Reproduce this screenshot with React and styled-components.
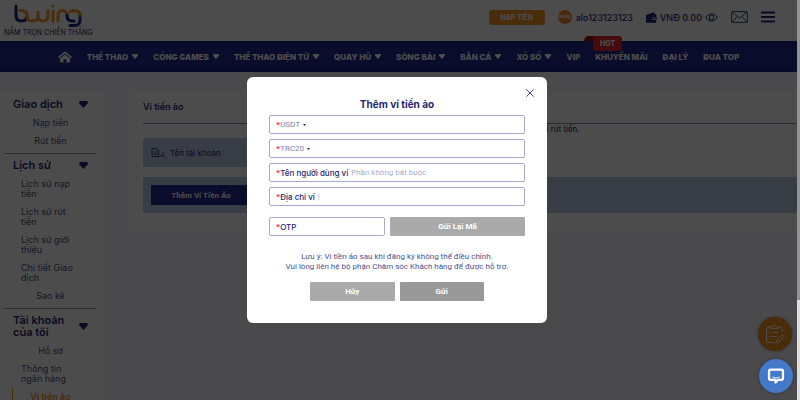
import React, { useState } from 'react'
import styled, { createGlobalStyle } from 'styled-components'

const menu = [
  { name: 'THỂ THAO', drop: true },
  { name: 'CỔNG GAMES', drop: true },
  { name: 'THỂ THAO ĐIỆN TỬ', drop: true },
  { name: 'QUAY HŨ', drop: true },
  { name: 'SÒNG BÀI', drop: true },
  { name: 'BẮN CÁ', drop: true },
  { name: 'XỔ SỐ', drop: true },
  { name: 'VIP' },
  { name: 'KHUYẾN MÃI', hot: true },
  { name: 'ĐẠI LÝ' },
  { name: 'ĐUA TOP' },
]

const sections = [
  { title: 'Giao dịch', items: ['Nạp tiền', 'Rút tiền'] },
  {
    title: 'Lịch sử',
    items: ['Lịch sử nạp tiền', 'Lịch sử rút tiền', 'Lịch sử giới thiệu', 'Chi tiết Giao dịch', 'Sao kê'],
  },
  { title: 'Tài khoản của tôi', items: ['Hồ sơ', 'Thông tin ngân hàng', 'Ví tiền ảo'] },
]

const Logo = () => (
  <svg width="70" height="24" viewBox="0 0 70 24" fill="none" strokeWidth="3" strokeLinecap="round" aria-label="bwing" role="img">
    <path d="M3 2V11.5Q3 17 8.5 17Q14 17 14 12" stroke="#1d2786" />
    <path d="M7 6.5H8.5Q14 6.5 14 12Q14 17 19.5 17Q25 17 25 12V7V12Q25 17 30 17Q35 17 35 12V7" stroke="#f39322" />
    <path d="M40 7.5V17M40 2V2.1M45 17V12Q45 6.5 49.5 6.5Q54 6.5 54 11.5" stroke="#f39322" />
    <path d="M54 11.5Q54 17 59.5 17H61M67 10V16Q67 21.5 61.5 21.5H57" stroke="#1d2786" />
    <path d="M57 8Q58.5 6.5 61 6.5Q67 6.5 67 11.5" stroke="#f39322" />
  </svg>
)

const Caret = () => (
  <svg width="6" height="5" viewBox="0 0 6 5" fill="currentColor" aria-hidden="true">
    <path d="M.6 0H5.4Q6 0 6 .7V1.6L3.4 4.7Q3 5.1 2.6 4.7L0 1.6V.7Q0 0 .6 0Z" />
  </svg>
)

const SmallCaret = () => (
  <svg width="3" height="2" viewBox="0 0 3 2" fill="currentColor" aria-hidden="true">
    <path d="M0 0H3L1.5 2Z" />
  </svg>
)

const HomeIcon = () => (
  <svg width="14" height="12" viewBox="0 0 14 12" aria-hidden="true">
    <path d="M.8 6.3L7 1.3L13.2 6.3" fill="none" stroke="currentColor" strokeWidth="1.6" strokeLinecap="round" strokeLinejoin="round" />
    <path d="M7 3.6L12 7.6V10.6Q12 11.4 11.2 11.4H8.5V8.2H5.5V11.4H2.8Q2 11.4 2 10.6V7.6Z" fill="currentColor" />
  </svg>
)

const WalletIcon = () => (
  <svg width="11" height="11" viewBox="0 0 11 11" fill="currentColor" aria-hidden="true">
    <path d="M0 3L8 .3L8.8 2.2H9.6Q10.3 2.2 10.3 3V4.9H7.5Q6 5 6 6.4Q6 7.9 7.5 7.9H10.3V10Q10.3 10.8 9.5 10.8H.8Q0 10.8 0 10Z" />
    <path d="M7.4 5.5H11V7.3H7.4Q6.7 7.2 6.7 6.4Q6.7 5.6 7.4 5.5Z" />
  </svg>
)

const EyeIcon = () => (
  <svg width="13" height="9" viewBox="0 0 13 9" fill="none" stroke="currentColor" strokeWidth="1" aria-hidden="true">
    <path d="M.5 4.5Q3 .8 6.5 .8Q10 .8 12.5 4.5Q10 8.2 6.5 8.2Q3 8.2 .5 4.5Z" />
    <circle cx="6.5" cy="4.5" r="2.3" />
  </svg>
)

const MailIcon = () => (
  <svg width="17" height="12" viewBox="0 0 17 12" fill="none" stroke="currentColor" strokeWidth=".9" aria-hidden="true">
    <rect x=".6" y=".6" width="15.8" height="10.8" rx=".8" />
    <path d="M1 1L8.5 7L16 1M1 11L6.2 5.4M16 11L10.8 5.4" />
  </svg>
)

const BurgerIcon = () => (
  <svg width="14" height="12" viewBox="0 0 14 12" stroke="currentColor" strokeWidth="2" aria-hidden="true">
    <path d="M0 1.5H14M0 6H14M0 10.5H14" />
  </svg>
)

const AccountIcon = () => (
  <svg width="15" height="10" viewBox="0 0 15 10" fill="none" stroke="currentColor" strokeWidth=".9" aria-hidden="true">
    <path d="M1 .6H5.6L7.6 2.6V8.6H1ZM2.6 4H6M2.6 6H6M9 8.4L10 7L10.6 8H14M11 6.4L13.4 4.4" />
  </svg>
)

const CloseIcon = () => (
  <svg width="8" height="8" viewBox="0 0 8 8" stroke="currentColor" strokeWidth="1" aria-hidden="true">
    <path d="M.3 .3L7.7 7.7M7.7 .3L.3 7.7" />
  </svg>
)

const ClipboardIcon = () => (
  <svg width="20" height="20" viewBox="0 0 20 20" fill="none" stroke="currentColor" strokeWidth="1" strokeLinejoin="round" aria-hidden="true">
    <path d="M6 3H3Q1.5 3 1.5 4.5V17Q1.5 18.5 3 18.5H10M13 3H15.5Q17 3 17 4.5V8.5" />
    <path d="M6 4.5V2.5H7.8Q8 1 9.5 1Q11 1 11.2 2.5H13V4.5Z" />
    <path d="M4.5 8.5H6M7.5 8.5H13M4.5 12.5H6M7.5 12.5H12" />
    <path d="M12 16L17.5 10.8L19.3 12.6L14 18L11.5 18.5Z" />
  </svg>
)

const ChatIcon = () => (
  <svg width="18" height="18" viewBox="0 0 16 16" fill="none" aria-hidden="true">
    <path d="M3.2 2.4H12.8Q14.2 2.4 14.2 3.8V10Q14.2 11.4 12.8 11.4H10L7.6 13.8V11.4H3.2Q1.8 11.4 1.8 10V3.8Q1.8 2.4 3.2 2.4Z" stroke="#fff" strokeWidth="2" strokeLinejoin="round" />
    <path d="M4.8 9Q8 10.6 11.2 9" stroke="#fff" strokeWidth=".8" />
  </svg>
)

export default function App() {
  const [open, setOpen] = useState(true)

  return (
    <>
      <GlobalStyle />
      <Page>
        <Header>
          <Brand href="#">
            <Logo />
            <span>NẮM TRỌN CHIẾN THẮNG</span>
          </Brand>
          <Account>
            <Deposit type="button">NẠP TIỀN</Deposit>
            <User href="#">
              <Avatar>bwing</Avatar>
              alo123123123
            </User>
            <Balance>
              <WalletIcon />
              VNĐ 0.00
              <IconButton type="button" aria-label="Ẩn số dư"><EyeIcon /></IconButton>
            </Balance>
            <IconButton type="button" aria-label="Tin nhắn"><MailIcon /></IconButton>
            <IconButton type="button" aria-label="Menu"><BurgerIcon /></IconButton>
          </Account>
        </Header>

        <Nav>
          <NavLink href="#" aria-label="Trang chủ"><HomeIcon /></NavLink>
          {menu.map((m) => (
            <NavLink href="#" key={m.name}>
              {m.name}
              {m.drop && <Caret />}
              {m.hot && <Hot>HOT</Hot>}
            </NavLink>
          ))}
        </Nav>

        <Body>
          <Sidebar>
            {sections.map((s) => (
              <Section key={s.title}>
                <SectionTitle>
                  {s.title}
                  <Caret />
                </SectionTitle>
                {s.items.map((item) => (
                  <SideLink href="#" key={item} $active={item === 'Ví tiền ảo'}>
                    <span>{item}</span>
                  </SideLink>
                ))}
              </Section>
            ))}
          </Sidebar>

          <Card>
            <CardTitle>Ví tiền ảo</CardTitle>
            <CardNote>Vui lòng thêm ví tiền ảo của bạn vào đây trước khi rút tiền.</CardNote>
            <NameBox>
              <AccountIcon />
              Tên tài khoản
            </NameBox>
            <ActionBox>
              <AddButton type="button" onClick={() => setOpen(true)}>Thêm Ví Tiền Ảo</AddButton>
            </ActionBox>
          </Card>
        </Body>
      </Page>

      <NoteFab type="button" aria-label="Khảo sát"><ClipboardIcon /></NoteFab>
      <ScrollTrack><ScrollThumb /></ScrollTrack>

      {open && (
        <Overlay>
          <Modal role="dialog" aria-labelledby="wallet-title">
            <Close type="button" aria-label="Đóng" onClick={() => setOpen(false)}><CloseIcon /></Close>
            <ModalTitle id="wallet-title">Thêm ví tiền ảo</ModalTitle>
            <Form onSubmit={(e) => e.preventDefault()}>
              <Field>
                <Star>*</Star>
                <Select aria-label="Loại tiền"><option>USDT</option></Select>
                <SmallCaret />
              </Field>
              <Field>
                <Star>*</Star>
                <Select aria-label="Giao thức"><option>TRC20</option></Select>
                <SmallCaret />
              </Field>
              <Field>
                <Star>*</Star>
                <label htmlFor="owner">Tên người dùng ví</label>
                <Input id="owner" placeholder="Phần không bắt buộc" />
              </Field>
              <Field>
                <Star>*</Star>
                <label htmlFor="address">Địa chỉ ví</label>
                <Input id="address" placeholder="|" />
              </Field>
              <OtpRow>
                <Field>
                  <Star>*</Star>
                  <label htmlFor="otp">OTP</label>
                  <Input id="otp" />
                </Field>
                <GreyButton type="button">Gửi Lại Mã</GreyButton>
              </OtpRow>
              <Notice>
                Lưu ý: Ví tiền ảo sau khi đăng ký không thể điều chỉnh.
                <br />
                Vui lòng liên hệ bộ phận Chăm sóc Khách hàng để được hỗ trợ.
              </Notice>
              <Actions>
                <GreyButton type="button" onClick={() => setOpen(false)}>Hủy</GreyButton>
                <GreyButton type="submit" $dark>Gửi</GreyButton>
              </Actions>
            </Form>
          </Modal>
        </Overlay>
      )}

      <ChatFab type="button" aria-label="Chat"><ChatIcon /></ChatFab>
    </>
  )
}

const GlobalStyle = createGlobalStyle`
  * {
    box-sizing: border-box;
  }
  body {
    margin: 0;
    overflow: hidden;
    background: #f7f7fd;
    color: #1d2770;
    font-family: Inter, "Noto Sans", sans-serif;
    font-size: 8px;
  }
  button, input, select {
    font: inherit;
    color: inherit;
    border: 0;
    padding: 0;
    background: none;
  }
  button {
    cursor: pointer;
  }
  a {
    color: inherit;
    text-decoration: none;
  }
  svg {
    display: block;
    flex: none;
  }
`

const Page = styled.div`
  height: 100vh;
  overflow: hidden;
  padding-right: 3px;
`

const Header = styled.header`
  height: 41px;
  padding: 4px 22px 0 4px;
  display: flex;
  align-items: flex-start;
  justify-content: space-between;
  background: #fff;
`

const Brand = styled.a`
  display: flex;
  flex-direction: column;
  align-items: center;
  font-size: 7px;
  line-height: 10px;
  font-weight: 400;
  white-space: nowrap;
`

const Account = styled.div`
  height: 26px;
  display: flex;
  align-items: center;
  gap: 13px;
  font-size: 9px;
  font-weight: 500;
`

const Deposit = styled.button`
  width: 56px;
  height: 15px;
  border-radius: 3px;
  background: #f39322;
  color: #fff;
  font-size: 7px;
  font-weight: 700;
`

const User = styled.a`
  display: flex;
  align-items: center;
  gap: 4px;
`

const Avatar = styled.span`
  width: 14px;
  height: 14px;
  border-radius: 50%;
  background: #f08235;
  color: #fff;
  font-size: 4px;
  line-height: 14px;
  font-weight: 700;
  text-align: center;
`

const Balance = styled.div`
  display: flex;
  align-items: center;
  gap: 3px;
`

const IconButton = styled.button`
  display: block;
`

const Nav = styled.nav`
  height: 31px;
  display: flex;
  align-items: center;
  justify-content: center;
  gap: 15px;
  background: #1e2a8c;
  border-top: 1px solid #141c66;
  border-bottom: 1px solid #141c66;
  color: #fff;
  font-weight: 800;
`

const NavLink = styled.a`
  position: relative;
  display: flex;
  align-items: center;
  gap: 4px;
  white-space: nowrap;
`

const Hot = styled.span`
  position: absolute;
  left: -2px;
  top: -16px;
  width: 29px;
  height: 15px;
  border-radius: 0 3px 3px 3px;
  background: #e8262c;
  font-size: 7px;
  line-height: 15px;
  text-align: center;

  &::before {
    content: "";
    position: absolute;
    right: 100%;
    top: 0;
    width: 9px;
    height: 5px;
    border-radius: 5px 0 0 0;
    background: #9c1418;
  }
`

const Body = styled.div`
  display: flex;
  align-items: flex-start;
  gap: 24px;
  padding-top: 19px;
`

const Sidebar = styled.aside`
  width: 105px;
  flex: none;
  padding: 2px 9px 0 4px;
  background: #fff;
`

const Section = styled.section`
  padding: 5px 0 3px;

  & + & {
    border-top: 1px solid #9a9aa6;
  }
`

const SectionTitle = styled.h2`
  margin: 0 0 4px;
  padding: 0 8px 0 9px;
  display: flex;
  align-items: center;
  justify-content: space-between;
  gap: 12px;
  font-size: 11px;
  line-height: 12px;
  font-weight: 600;

  svg {
    width: 9px;
    height: 7px;
  }
`

const SideLink = styled.a`
  margin-left: 8px;
  padding: 4px 16px 4px 8px;
  display: flex;
  justify-content: center;
  border-left: 1px solid ${(p) => (p.$active ? '#f39322' : 'transparent')};
  color: ${(p) => (p.$active ? '#f39322' : '#4b5080')};
  font-weight: ${(p) => (p.$active ? 600 : 400)};
  font-size: 9px;
  line-height: 10px;
`

const Card = styled.main`
  flex: 1;
  padding: 11px 0 20px 14px;
  border-radius: 4px 0 0 4px;
  background: #fff;
`

const CardTitle = styled.h1`
  margin: 0;
  padding-bottom: 11px;
  border-bottom: 1px solid #8a8aa0;
  font-size: 9px;
  line-height: 10px;
  font-weight: 600;
`

const CardNote = styled.p`
  margin: 0 0 4px;
  line-height: 10px;
  text-align: center;
`

const NameBox = styled.div`
  width: 50%;
  height: 29px;
  margin-bottom: 10px;
  padding: 0 8px;
  display: flex;
  align-items: center;
  gap: 4px;
  border-radius: 2px;
  background: #bdcee6;
`

const ActionBox = styled.div`
  padding: 8px;
  border-radius: 2px;
  background: #bdcee6;
`

const AddButton = styled.button`
  width: 100px;
  height: 20px;
  display: block;
  background: #1e2a8c;
  color: #fff;
  font-family: Roboto, sans-serif;
  font-weight: 700;
`

const NoteFab = styled.button`
  position: fixed;
  right: 8px;
  bottom: 49px;
  width: 34px;
  height: 34px;
  display: grid;
  place-items: center;
  border-radius: 50%;
  background: #f7941d;
  color: #fff;
  box-shadow: 0 0 3px rgba(0, 0, 0, 0.4);
`

const ChatFab = styled(NoteFab)`
  right: 7px;
  bottom: 7px;
  background: #4379c8;
`

const ScrollTrack = styled.div`
  position: fixed;
  top: 0;
  right: 0;
  bottom: 0;
  width: 3px;
  background: #dedede;
`

const ScrollThumb = styled.div`
  height: 75%;
  background: #939393;
`

const Overlay = styled.div`
  position: fixed;
  inset: 0 3px 0 0;
  padding-right: 3px;
  display: flex;
  align-items: center;
  justify-content: center;
  background: rgba(0, 0, 0, 0.7);
`

const Modal = styled.div`
  position: relative;
  width: 300px;
  padding: 21px 22px 22px;
  border-radius: 6px;
  background: #fff;
`

const Close = styled.button`
  position: absolute;
  top: 12px;
  right: 13px;
  color: #3c4c9c;
`

const ModalTitle = styled.h2`
  margin: 0 0 5px;
  font-size: 10px;
  line-height: 12px;
  font-weight: 700;
  text-align: center;
`

const Form = styled.form`
  display: flex;
  flex-direction: column;
  gap: 5px;
`

const Field = styled.div`
  flex: 1 0 auto;
  min-width: 0;
  height: 19px;
  padding: 0 6px;
  display: flex;
  align-items: center;
  border: 1px solid #a5acd4;
  border-radius: 2px;
  font-weight: 500;
  white-space: nowrap;
`

const Star = styled.span`
  color: #f00;
`

const Select = styled.select`
  appearance: none;
  margin-right: 3px;
  color: #7d83ac;
  font-family: Roboto, sans-serif;
  font-weight: 400;
`

const Input = styled.input`
  flex: 1;
  min-width: 0;
  margin-left: 3px;
  outline: 0;
  font-family: Roboto, sans-serif;
  font-weight: 400;

  &::placeholder {
    color: #a9adc9;
    opacity: 1;
  }
`

const OtpRow = styled.div`
  margin: 6px 0 11px;
  display: grid;
  grid-template-columns: 116fr 135fr;
  gap: 5px;
`

const GreyButton = styled.button`
  height: 19px;
  border-radius: 1px;
  background: ${(p) => (p.$dark ? '#999' : '#aaa')};
  color: #fff;
  font-family: Roboto, sans-serif;
  font-weight: 700;
`

const Notice = styled.p`
  margin: 0 0 5px;
  line-height: 10px;
  color: #4a5290;
  font-family: Roboto, sans-serif;
  text-align: center;
  white-space: nowrap;
`

const Actions = styled.div`
  padding: 0 41px;
  display: grid;
  grid-template-columns: 1fr 1fr;
  gap: 5px;
`
